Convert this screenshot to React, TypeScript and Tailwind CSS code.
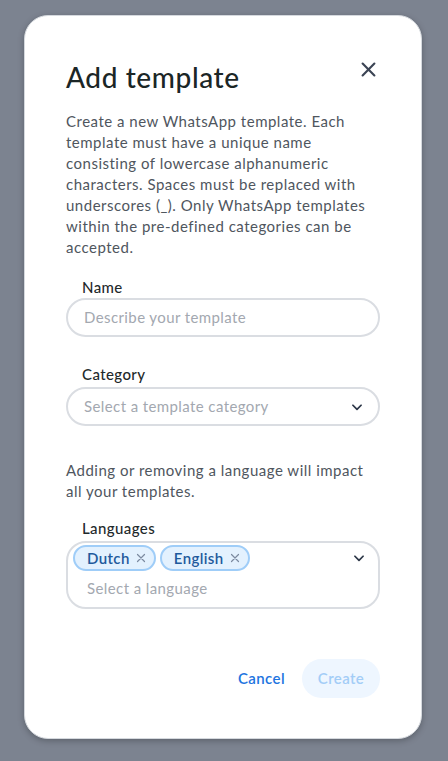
import React from 'react';

const font = { fontFamily: '"Lato", "Noto Sans", sans-serif' };

function Chevron() {
  return (
    <svg width="14" height="14" viewBox="0 0 24 24" fill="none" stroke="#2d3748" strokeWidth="3" strokeLinecap="round" strokeLinejoin="round">
      <path d="M5 9l7 7 7-7" />
    </svg>
  );
}

function Chip({ label }: { label: string }) {
  return (
    <span className="inline-flex h-[26px] items-center gap-[6px] rounded-full border-2 border-[#9fcdf8] bg-[#e3f1fe] pl-[12px] pr-[8px] text-[15px] font-semibold tracking-[0.4px] text-[#1f5a9c]">
      {label}
      <svg width="10" height="10" viewBox="0 0 10 10" stroke="#7b8aa0" strokeWidth="1.2" strokeLinecap="round">
        <path d="M1.5 1.5l7 7M8.5 1.5l-7 7" />
      </svg>
    </span>
  );
}

export default function App() {
  return (
    <div className="min-h-[761px] bg-[#7c8390] pl-[24px] pt-[15px]" style={font}>
      <div className="flex h-[724px] w-[398px] flex-col rounded-[24px] border border-[#d5d9de] bg-white px-[41px] pt-[44px] shadow-[0_2px_6px_rgba(0,0,0,0.25)]">
        <div className="flex items-start justify-between">
          <h2 className="text-[28px] leading-[34px] font-medium tracking-[0.6px] text-[#1b2626]">Add template</h2>
          <button className="mr-[4px] mt-[2px] text-[#3b4454]">
            <svg width="15" height="15" viewBox="0 0 14 14" stroke="currentColor" strokeWidth="2" strokeLinecap="round">
              <path d="M1.5 1.5l11 11M12.5 1.5l-11 11" />
            </svg>
          </button>
        </div>

        <p className="mt-[17px] text-[15px] leading-[21px] tracking-[0.5px] text-[#4f565e]">
          Create a new WhatsApp template. Each template must have a unique name consisting of lowercase alphanumeric characters. Spaces must be replaced with underscores (_). Only WhatsApp templates within the pre-defined categories can be accepted.
        </p>

        <label className="mt-[19px] pl-[16px] text-[15px] leading-[20px] font-medium tracking-[0.4px] text-[#1f2a2c]">Name</label>
        <div className="mt-[1px] flex h-[39px] items-center rounded-full border-2 border-[#dadde2] px-[16px]">
          <span className="text-[15px] tracking-[0.4px] text-[#a3a8b0]">Describe your template</span>
        </div>

        <label className="mt-[27px] pl-[16px] text-[15px] leading-[20px] font-medium tracking-[0.4px] text-[#1f2a2c]">Category</label>
        <div className="mt-[3px] flex h-[39px] items-center justify-between rounded-full border-2 border-[#dadde2] pl-[16px] pr-[14px]">
          <span className="text-[15px] tracking-[0.4px] text-[#a3a8b0]">Select a template category</span>
          <Chevron />
        </div>

        <p className="mt-[34px] text-[15px] leading-[21px] tracking-[0.5px] text-[#4f565e]">
          Adding or removing a language will impact all your templates.
        </p>

        <label className="mt-[16px] pl-[16px] text-[15px] leading-[20px] font-medium tracking-[0.4px] text-[#1f2a2c]">Languages</label>
        <div className="mt-[3px] flex h-[68px] flex-col rounded-[20px] border-2 border-[#dadde2] pl-[5px] pr-[12px] pt-[2px]">
          <div className="flex items-center justify-between">
            <div className="flex gap-[4px]">
              <Chip label="Dutch" />
              <Chip label="English" />
            </div>
            <Chevron />
          </div>
          <span className="mt-[6px] pl-[14px] text-[15px] tracking-[0.4px] text-[#a3a8b0]">Select a language</span>
        </div>

        <div className="mt-[50px] flex items-center justify-end gap-[16px]">
          <button className="px-[1px] text-[15px] font-semibold tracking-[0.4px] text-[#1d74e0]">Cancel</button>
          <button className="h-[39px] w-[78px] rounded-full bg-[#eef6ff] text-[15px] font-semibold tracking-[0.4px] text-[#a3cdf7]">Create</button>
        </div>
      </div>
    </div>
  );
}
